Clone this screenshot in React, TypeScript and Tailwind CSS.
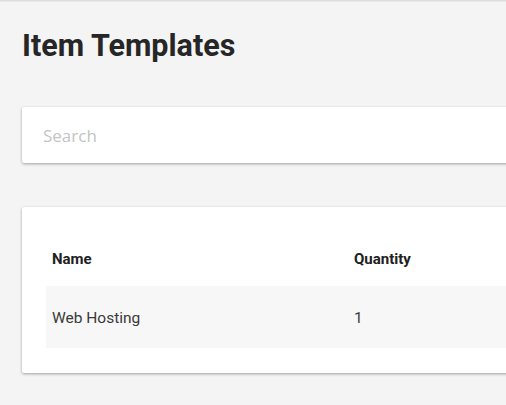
export default function App() {
    return (
        <div className="relative w-[506px] h-[405px] overflow-hidden bg-[#f4f4f4] font-['Roboto',sans-serif]">
            <div className="absolute top-0 left-0 right-0 h-[2px] bg-gradient-to-b from-[#d8d8d8] to-[#f0f0f0]" />
            <div className="pl-[22px] pt-[28px] w-[640px]">
                <h1 className="text-[30.5px] leading-9 font-bold text-[#262626]">Item Templates</h1>

                <div className="mt-[43px] h-[56px] bg-white rounded-[2px] shadow-[0_1px_3px_rgba(0,0,0,0.35)] flex items-center px-[21px] pt-[2px]">
                    <input
                        placeholder="Search"
                        className="w-full outline-none bg-transparent text-[17px] font-['Open_Sans',sans-serif] text-[#333] placeholder:text-[#c4c4c4]"
                    />
                </div>

                <div className="mt-[44px] bg-white rounded-[2px] shadow-[0_1px_3px_rgba(0,0,0,0.35)] px-[24px] pt-[24px] pb-[25px]">
                    <table className="w-full border-collapse">
                        <thead>
                            <tr className="h-[55px]">
                                <th className="w-[302px] pl-[6px] pt-[2px] text-left text-[15px] font-bold text-[#212121]">Name</th>
                                <th className="pl-[6px] pt-[2px] text-left text-[15px] font-bold text-[#212121]">Quantity</th>
                            </tr>
                        </thead>
                        <tbody>
                            <tr className="h-[62px] bg-[#f7f7f7]">
                                <td className="pl-[6px] pt-[3px] text-[15.5px] text-[#3a3a3a]">Web Hosting</td>
                                <td className="pl-[6px] pt-[3px] text-[15.5px] text-[#3a3a3a]">1</td>
                            </tr>
                        </tbody>
                    </table>
                </div>
            </div>
        </div>
    )
}
